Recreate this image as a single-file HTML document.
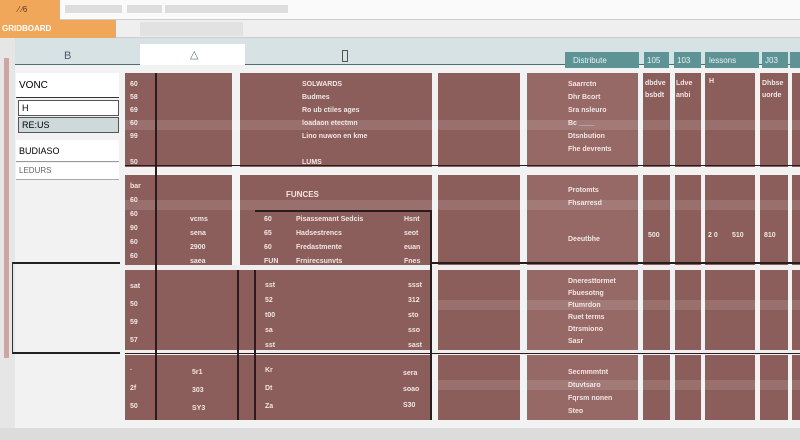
<!DOCTYPE html><html><head><style>
body{margin:0;width:800px;height:440px;overflow:hidden;background:#f2f2f2;font-family:"Liberation Sans",sans-serif;position:relative}
div{position:absolute;box-sizing:border-box}
.b{background:#8b5d5b}
.l{background:#966967}
.t{color:#f3e6e4;font-size:7px;font-weight:bold;white-space:nowrap}
.v{background:#2a1c1c;width:2px}
.h{background:#2a1c1c;height:2px}
.band{background:rgba(255,255,255,.12);height:10px}
</style></head><body>
<div style="left:0;top:0;width:800px;height:20px;background:#fafafa;border-bottom:1px solid #ccc"></div>
<div style="left:0;top:0;width:60px;height:20px;background:#f0a75a"></div>
<div style="left:18px;top:5px;font-size:8px;color:#5a3a20">⁄ ⁄6</div>
<div style="left:65px;top:5px;width:57px;height:8px;background:#ddd"></div>
<div style="left:127px;top:5px;width:35px;height:8px;background:#ddd"></div>
<div style="left:165px;top:5px;width:35px;height:8px;background:#ddd"></div>
<div style="left:200px;top:5px;width:88px;height:8px;background:#ddd"></div>
<div style="left:0;top:20px;width:800px;height:18px;background:#efefef;border-bottom:1px solid #ccc"></div>
<div style="left:0;top:20px;width:116px;height:18px;background:#f0a75a;color:#fff;font-size:8px;font-weight:bold;padding:4px 0 0 2px">GRIDBOARD</div>
<div style="left:140px;top:22px;width:103px;height:14px;background:#e2e2e2"></div>
<div style="left:0;top:38px;width:800px;height:27px;background:#d6e2e3;border-bottom:1px solid #4d6f73"></div>
<div style="left:140px;top:44px;width:105px;height:21px;background:#fff"></div>
<div style="left:64px;top:50px;font-size:11px;color:#557">B</div>
<div style="left:190px;top:48px;font-size:11px;color:#576">△</div>
<div style="left:342px;top:50px;width:6px;height:12px;border:1px solid #555"></div>
<div style="left:565px;top:52px;width:74px;height:16px;background:#5e9396;color:#e8f2f2;font-size:8px;padding:4px 8px">Distribute</div>
<div style="left:644px;top:52px;width:25px;height:16px;background:#5e9396;color:#e8f2f2;font-size:8px;padding:4px 3px">105</div>
<div style="left:674px;top:52px;width:27px;height:16px;background:#5e9396;color:#e8f2f2;font-size:8px;padding:4px 3px">103</div>
<div style="left:705px;top:52px;width:54px;height:16px;background:#5e9396;color:#e8f2f2;font-size:8px;padding:4px 4px">lessons</div>
<div style="left:762px;top:52px;width:26px;height:16px;background:#5e9396;color:#e8f2f2;font-size:8px;padding:4px 3px">J03</div>
<div style="left:790px;top:52px;width:10px;height:16px;background:#5e9396"></div>
<div style="left:0;top:38px;width:15px;height:402px;background:#e6e6e6"></div>
<div style="left:4px;top:58px;width:5px;height:300px;background:#c9a8a3"></div>
<div style="left:16px;top:73px;width:103px;height:25px;background:#fff;border-bottom:1px solid #333;font-size:10px;padding:7px 3px">VONC</div>
<div style="left:18px;top:100px;width:101px;height:16px;background:#fff;border:1px solid #555;font-size:9px;padding:2px 3px">H</div>
<div style="left:18px;top:117px;width:101px;height:16px;background:#cdd9db;border:1px solid #555;font-size:9px;padding:2px 3px">RE:US</div>
<div style="left:16px;top:140px;width:103px;height:22px;background:#fff;border-bottom:1px solid #999;font-size:9px;padding:6px 3px">BUDIASO</div>
<div style="left:16px;top:163px;width:103px;height:17px;background:#fff;border-bottom:1px solid #aaa;font-size:8px;color:#666;padding:3px 3px">LEDURS</div>
<div style="left:12px;top:262px;width:108px;height:92px;border-top:2px solid #222;border-bottom:2px solid #222;border-left:1px solid #333"></div>
<div class="b" style="left:125px;top:73px;width:107px;height:94px"></div>
<div class="b" style="left:240px;top:73px;width:192px;height:94px"></div>
<div class="b" style="left:438px;top:73px;width:82px;height:94px"></div>
<div class="l" style="left:527px;top:73px;width:111px;height:94px"></div>
<div class="b" style="left:643px;top:73px;width:27px;height:94px"></div>
<div class="b" style="left:675px;top:73px;width:26px;height:94px"></div>
<div class="b" style="left:705px;top:73px;width:50px;height:94px"></div>
<div class="b" style="left:760px;top:73px;width:28px;height:94px"></div>
<div class="b" style="left:792px;top:73px;width:8px;height:94px"></div>
<div class="b" style="left:125px;top:175px;width:307px;height:245px"></div>
<div class="b" style="left:438px;top:175px;width:82px;height:245px"></div>
<div class="l" style="left:527px;top:175px;width:111px;height:245px"></div>
<div class="b" style="left:643px;top:175px;width:27px;height:245px"></div>
<div class="b" style="left:675px;top:175px;width:26px;height:245px"></div>
<div class="b" style="left:705px;top:175px;width:50px;height:245px"></div>
<div class="b" style="left:760px;top:175px;width:28px;height:245px"></div>
<div class="b" style="left:792px;top:175px;width:8px;height:245px"></div>
<div style="left:125px;top:265px;width:675px;height:5px;background:#eee"></div>
<div style="left:125px;top:350px;width:675px;height:5px;background:#eee"></div>
<div style="left:232px;top:167px;width:8px;height:98px;background:#f5f5f5"></div>
<div class="band" style="left:125px;top:120px;width:675px"></div>
<div class="band" style="left:125px;top:200px;width:675px"></div>
<div class="band" style="left:438px;top:300px;width:362px"></div>
<div class="band" style="left:438px;top:380px;width:362px"></div>
<div class="v" style="left:155px;top:73px;height:347px"></div>
<div class="v" style="left:237px;top:270px;height:150px"></div>
<div class="v" style="left:254px;top:270px;height:150px"></div>
<div class="v" style="left:430px;top:210px;height:210px"></div>
<div class="h" style="left:255px;top:210px;width:176px"></div>
<div class="h" style="left:125px;top:165px;width:675px;height:1px"></div>
<div class="h" style="left:430px;top:262px;width:370px"></div>
<div class="h" style="left:125px;top:353px;width:675px;height:1px"></div>
<div class="t" style="left:130px;top:78px;line-height:13px">60<br>58<br>69<br>60<br>99<br>&nbsp;<br>50</div>
<div class="t" style="left:302px;top:78px;line-height:13px">SOLWARDS<br>Budmes<br>Ro ub ctiles ages<br>loadaon etectmn<br>Lino nuwon en kme<br><br>LUMS</div>
<div class="t" style="left:568px;top:78px;line-height:13px">Saarrctn<br>Dhr Bcort<br>Sra nsleuro<br>Bc ____<br>Dtsnbution<br>Fhe devrents</div>
<div class="t" style="left:645px;top:78px;line-height:12px">dbdve<br>bsbdt</div>
<div class="t" style="left:676px;top:78px;line-height:12px">Ldve<br>anbi</div>
<div class="t" style="left:709px;top:78px">H</div>
<div class="t" style="left:762px;top:78px;line-height:12px">Dhbse<br>uorde</div>
<div class="t" style="left:130px;top:180px;line-height:14px">bar<br>60<br>60<br>90<br>60<br>60</div>
<div class="t" style="left:286px;top:190px;font-size:8px">FUNCES</div>
<div class="t" style="left:190px;top:213px;line-height:14px">vcms<br>sena<br>2900<br>saea</div>
<div class="t" style="left:264px;top:213px;line-height:14px">60<br>65<br>60<br>FUN</div>
<div class="t" style="left:296px;top:213px;line-height:14px">Pisassemant Sedcis<br>Hadsestrencs<br>Fredastmente<br>Frnirecsunvts</div>
<div class="t" style="left:404px;top:213px;line-height:14px">Hsnt<br>seot<br>euan<br>Fnes</div>
<div class="t" style="left:568px;top:184px;line-height:13px">Protomts<br>Fhsarresd</div>
<div class="t" style="left:568px;top:236px">Deeutbhe</div>
<div class="t" style="left:648px;top:232px">500</div>
<div class="t" style="left:708px;top:232px">2 0</div>
<div class="t" style="left:732px;top:232px">510</div>
<div class="t" style="left:764px;top:232px">810</div>
<div class="t" style="left:130px;top:278px;line-height:18px">sat<br>50<br>59<br>57</div>
<div class="t" style="left:265px;top:278px;line-height:15px">sst<br>52<br>t00<br>sa<br>sst</div>
<div class="t" style="left:408px;top:278px;line-height:15px">ssst<br>312<br>sto<br>sso<br>sast</div>
<div class="t" style="left:568px;top:276px;line-height:12px">Dneresttormet<br>Fbuesotng<br>Ftumrdon<br>Ruet terms<br>Dtrsmiono<br>Sasr</div>
<div class="t" style="left:130px;top:362px;line-height:18px">·<br>2f<br>50</div>
<div class="t" style="left:192px;top:364px;line-height:18px">5r1<br>303<br>SY3</div>
<div class="t" style="left:265px;top:362px;line-height:18px">Kr<br>Dt<br>Za</div>
<div class="t" style="left:403px;top:366px;line-height:16px">sera<br>soao<br>S30</div>
<div class="t" style="left:568px;top:366px;line-height:13px">Secmmmtnt<br>Dtuvtsaro<br>Fqrsm nonen<br>Steo</div>
<div style="left:0;top:428px;width:800px;height:12px;background:#dcdcdc"></div>
</body></html>
